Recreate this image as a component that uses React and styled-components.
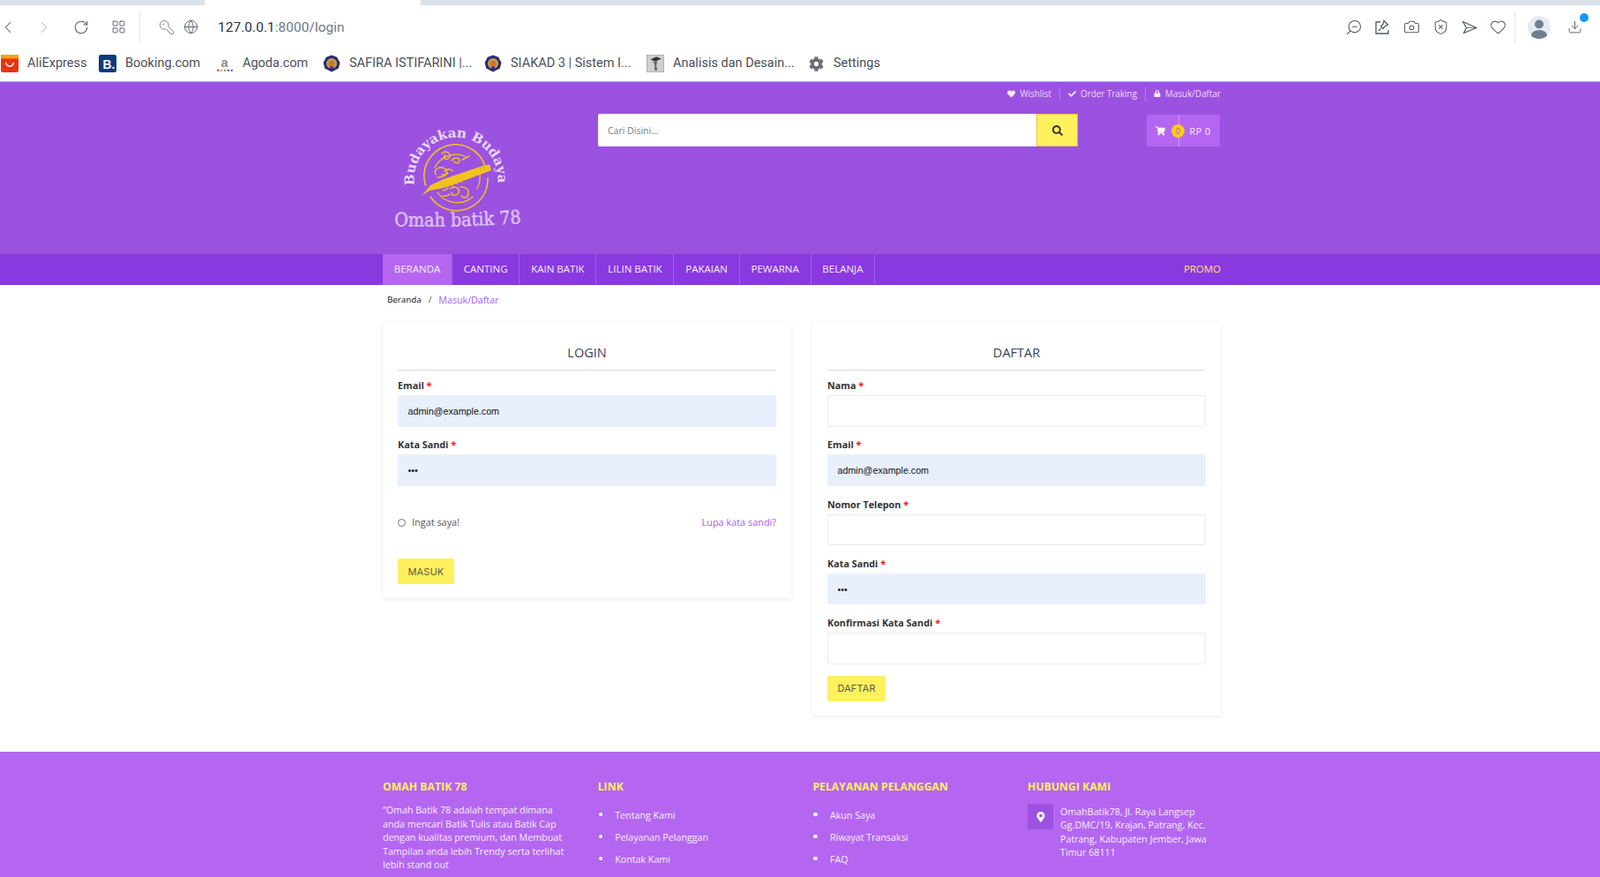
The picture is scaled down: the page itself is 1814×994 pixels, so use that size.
import React from "react";
import styled, { createGlobalStyle } from "styled-components";
import { ChevronLeft, ChevronRight, RotateCw, LayoutGrid, KeyRound, Globe, ZoomOut, Camera, ShieldX, Heart, Download } from "lucide-react";
import { FaHeart, FaCheck, FaLock, FaSearch, FaShoppingCart, FaMapMarkerAlt, FaCog } from "react-icons/fa";

const Global = createGlobalStyle`
  html, body { margin: 0; padding: 0; background: #fff; height: 994px; overflow: hidden; }
  * { box-sizing: border-box; }
  body { font-family: "Open Sans", "Liberation Sans", sans-serif; color: #333; }
`;

const Page = styled.div`width: 1814px; height: 994px; overflow: hidden; display: flex; flex-direction: column;`;

const TabStrip = styled.div`height: 6px; background: #dbe1e9; padding-left: 232px; flex: none;`;
const ActiveTab = styled.div`width: 245px; height: 6px; background: #fff; border-radius: 0 0 3px 3px;`;

const Toolbar = styled.div`height: 49px; flex: none; display: flex; align-items: center; position: relative; color: #4f5761;`;
const ToolBtn = styled.span`
  display: flex; align-items: center; justify-content: center; width: 22px; height: 22px; flex: none;
  margin-left: ${p => p.$ml || 0}px; color: ${p => p.$c || "#535b65"};
`;
const ToolDivider = styled.span`width: 1px; height: 36px; background: #e3e6ea; flex: none; margin-left: ${p => p.$ml}px;`;
const Url = styled.div`margin-left: 20px; font: 15.3px/20px "Roboto", sans-serif; color: #2a2f36; letter-spacing: .12px; flex: 1;`;
const UrlRest = styled.span`color: #6c7885;`;
const Avatar = styled.span`
  width: 26px; height: 26px; border-radius: 50%; background: #e6ebf1; margin-left: 14px; flex: none;
  position: relative; overflow: hidden; display: block;
`;
const DownloadWrap = styled.span`position: relative; display: flex; margin-left: 19px; margin-right: 20px; color: #535b65;`;
const Dot = styled.span`position: absolute; width: 10px; height: 10px; border-radius: 50%; background: #0c9aff; top: -7px; right: -7px;`;

const Bookmarks = styled.div`
  height: 38px; flex: none; display: flex; align-items: center; border-bottom: 1px solid #b4b9bf; padding-bottom: 3px; padding-left: 1px;
  font: 14.5px/18px "Roboto", sans-serif; color: #4b5058;
`;
const Mark = styled.div`display: flex; align-items: center; gap: 10px; width: ${p => p.$w}px; flex: none; white-space: nowrap;`;
const Fav = styled.svg`width: 20px; height: 20px; flex: none;`;
const CogWrap = styled.span`display: flex; color: #6b6e72; font-size: 17px; width: 18px;`;

const Header = styled.header`height: 195px; flex: none; background: #9c52e0;`;
const Wrap = styled.div`width: 950px; margin-left: 434px;`;
const TopLinks = styled.div`display: flex; justify-content: flex-end; align-items: center; height: 26px; color: #eedcff; font-size: 9.9px;`;
const TopLink = styled.span`
  display: flex; align-items: center; gap: 5px; padding: 0 9px; height: 15px;
  border-left: ${p => p.$first ? "none" : "1px solid #b27ee8"};
  &:last-child { padding-right: 0; }
  svg { color: #f3e9ff; font-size: ${p => p.$sz || 9}px; }
`;
const HeadRow = styled.div`display: flex; align-items: flex-start; position: relative;`;
const LogoBox = styled.div`width: 244px; height: 169px; padding: 13px 0 0 10px; flex: none;`;
const Search = styled.form`display: flex; width: 544px; height: 37px; margin-top: 10px; flex: none;`;
const SearchInput = styled.input`
  flex: 1; min-width: 0; border: 0; outline: 0; background: #fff; padding: 0 11px; font: 10.5px "Open Sans", sans-serif; color: #555;
  border-radius: 2px 0 0 2px;
  &::placeholder { color: #7a7a7a; opacity: 1; }
`;
const SearchBtn = styled.button`
  width: 47px; border: 1px solid #e9c83d; background: #fff05e; color: #333; font-size: 12px; display: flex; align-items: center; justify-content: center; padding: 0;
`;
const Cart = styled.div`
  margin-left: 78px; margin-top: 11px; width: 83px; height: 36px; background: #b466f0; border-radius: 2px; display: flex; align-items: center;
  color: #f4eaff; font-size: 11px; position: relative; flex: none;
`;
const CartLeft = styled.span`
  width: 36.5px; height: 100%; border-right: 1px solid #cf9df5; display: flex; align-items: center; padding-left: 10px; font-size: 11px; color: #fff; flex: none;
`;
const Count = styled.span`
  position: absolute; left: 28px; top: 11px; width: 15px; height: 15px; border-radius: 50%; background: #fdc91d; color: #946fb0;
  font-size: 8.5px; line-height: 15px; text-align: center;
`;
const CartTotal = styled.span`padding-left: 12px; letter-spacing: .4px;`;

const Nav = styled.nav`height: 35px; flex: none; background: #8a38e0;`;
const NavRow = styled.div`display: flex; align-items: stretch; height: 35px;`;
const NavItem = styled.a`
  padding: 0 12.8px 2px; display: flex; align-items: center; color: #f6efff; font-size: 11.5px;
  border-right: 1px solid #a05fe6; background: ${p => p.$active ? "#b466f0" : "transparent"};
`;
const Promo = styled.a`margin-left: auto; display: flex; align-items: center; color: #ffe65c; font-size: 11.4px; padding-bottom: 2px;`;

const Crumbs = styled.div`height: 43px; flex: none; padding: 9px 0 0 5px; font-size: 9.8px; line-height: 16px; display: flex; gap: 8px;`;
const CrumbHome = styled.span`color: #111;`;
const CrumbSep = styled.span`color: #444;`;
const CrumbCur = styled.span`color: #a660ec; font-size: 10.7px;`;

const Columns = styled.div`display: flex; gap: 24px; align-items: flex-start; height: 486px; flex: none;`;
const Card = styled.section`
  width: 463px; background: #fff; padding: 17px 17px 16px; flex: none; box-shadow: 0 1px 5px rgba(0,0,0,.09);
`;
const CardTitle = styled.h2`
  margin: 0 0 9px; text-align: center; font-weight: 400; font-size: 14.5px; line-height: 20px; color: #3a4256; padding: 7px 0 9px; border-bottom: 1px solid #dcdcdc;
`;
const Field = styled.div`margin-bottom: ${p => p.$mb ?? 12.8}px;`;
const Label = styled.label`display: block; font-size: 10.8px; font-weight: 700; line-height: 16px; color: #333; margin-bottom: 3px;`;
const Req = styled.span`color: #f01919;`;
const Input = styled.input`
  display: block; width: 100%; height: 35.5px; border: 1px solid ${p => p.$filled ? "#e8f0fd" : "#ebebeb"}; border-radius: 2px; outline: 0;
  background: ${p => p.$filled ? "#e8f0fd" : "#fff"}; padding: 0 10.5px; font: 10.7px "Liberation Sans", sans-serif; color: #111;
`;
const RememberRow = styled.div`display: flex; align-items: center; justify-content: space-between; margin-top: 32.5px; height: 16px; font-size: 10.9px;`;
const Remember = styled.span`display: flex; align-items: center; gap: 7px; color: #555;`;
const Radio = styled.span`width: 9px; height: 9px; border-radius: 50%; border: 1px solid #777; display: block; margin-top: 2px;`;
const Forgot = styled.a`color: #a660ec;`;
const Submit = styled.button`
  display: block; height: 29px; padding: 0 11.5px; border: 0; border-radius: 2px; background: #fff05e; color: #5c5c40;
  font: 11px "Inter", "Open Sans", sans-serif; letter-spacing: .1px; margin-top: ${p => p.$mt}px;
`;

const Footer = styled.footer`flex: 1; background: #b466f0; padding-top: 30px; color: #f6efff; font-size: 10.7px; overflow: hidden;`;
const FooterGrid = styled.div`display: grid; grid-template-columns: repeat(4, 243.7px);`;
const FootHead = styled.h3`margin: 1px 0 10px; font-size: 12.1px; line-height: 18px; font-weight: 700; color: #fff05e; letter-spacing: .1px;`;
const FootText = styled.p`margin: 1.5px 0 0; line-height: 15.6px; width: 212px;`;
const FootList = styled.ul`margin: 3px 0 0; padding: 0; list-style: none;`;
const FootItem = styled.li`
  display: flex; align-items: center; gap: 14px; height: 25px;
  &::before { content: ""; width: 4.5px; height: 4.5px; border-radius: 50%; background: #fff; margin-left: 1px; margin-top: -1px; }
`;
const Contact = styled.div`display: flex; gap: 8px;`;
const PinBox = styled.span`
  width: 29px; height: 29px; flex: none; background: #9c52e0; border-radius: 1px; display: flex; align-items: center; justify-content: center; color: #fff; font-size: 12px;
`;
const ContactText = styled.p`margin: 1.5px 0 0; line-height: 15.6px; width: 175px;`;

const I = { size: 18, strokeWidth: 1.4 };

function Crest() {
  return (
    <Fav viewBox="0 0 18 18">
      <path d="M9 .5 14.5 2.5 17.5 8 16 14 9 17.5 2 14 .5 8 3.5 2.5Z" fill="#2d2a6e" />
      <circle cx="9" cy="9" r="5.5" fill="#b9a24e" />
      <circle cx="9" cy="9" r="3" fill="#d8702c" />
      <path d="M7 12h4v2.5H7z" fill="#3c3a80" />
    </Fav>
  );
}

function Logo() {
  return (
    <svg width="150" height="130" viewBox="0 0 150 130">
      <defs>
        <path id="arc" d="M26 78 A 47.5 47.5 0 1 1 120 78" fill="none" />
        <path id="wave" d="M3 124 Q 75 126 147 121" fill="none" />
      </defs>
      <text fontFamily="'DejaVu Serif', serif" fontSize="15" fontWeight="700" fill="#e9d9f5">
        <textPath href="#arc" textLength="160" lengthAdjust="spacingAndGlyphs">Budayakan Budaya</textPath>
      </text>
      <g fill="none" stroke="#f2c21f" strokeLinecap="round">
        <path d="M38.5 78 A 35.5 35.5 0 0 1 106 56" strokeWidth="1.6" />
        <path d="M109 70 A 35.5 35.5 0 0 1 44 91" strokeWidth="1.6" />
        <path d="M52 86 A 27 27 0 0 0 92 91M100 66 A 27 27 0 0 1 97 82M49 58 A 27 27 0 0 1 83 45" strokeWidth="1.3" />
        <path d="M57 42c5-5 12 1 8 5s-8-1-4-3M68 50c4-5 9-3 9 0s-5 4-6 1M80 49l8-4M50 66c-3-7 5-10 10-7s2 8-3 7M60 62c3-3 7-3 9 0M52 69c5 0 9-2 12-5" strokeWidth="1.4" />
        <path d="M66 82c5-4 12-1 10 4s-8 4-8 0M78 80c6-1 10 3 9 8s-6 5-8 2M58 84c3 0 5-2 6-4M58 90c4 1 6 0 8-2" strokeWidth="1.4" />
      </g>
      <path d="M34 90 44 78 59 71 103 56 111 54.5 113 61 76 75 59 81 43 84Z" fill="#f2c21f" />
      <path d="M68 74l1.5 5M73 72l1.5 5M78 70l1.5 5M83 68l1 4" stroke="#f2c21f" strokeWidth="1.3" />
      <path d="M100 57l2 5M104 56l2 5" stroke="#c9992a" strokeWidth=".8" />
      <text fontFamily="'DejaVu Serif', serif" fontSize="21" fill="#e4cdf4" stroke="#e4cdf4" strokeWidth=".5" opacity=".9">
        <textPath href="#wave" textLength="144" lengthAdjust="spacingAndGlyphs">Omah batik 78</textPath>
      </text>
    </svg>
  );
}

export default function App() {
  return (
    <Page>
      <Global />
      <TabStrip><ActiveTab /></TabStrip>
      <Toolbar>
        <ToolBtn $ml={-2}><ChevronLeft size={26} strokeWidth={1.1} /></ToolBtn>
        <ToolBtn $ml={19} $c="#b4b9bf"><ChevronRight size={26} strokeWidth={1.1} /></ToolBtn>
        <ToolBtn $ml={20}><RotateCw {...I} /></ToolBtn>
        <ToolBtn $ml={20}><LayoutGrid size={17} strokeWidth={1.3} /></ToolBtn>
        <ToolDivider $ml={13} />
        <ToolBtn $ml={19} $c="#7a8089"><KeyRound size={18} strokeWidth={1.3} style={{ transform: "scaleX(-1)" }} /></ToolBtn>
        <ToolBtn $ml={5}><Globe size={17} strokeWidth={1.3} /></ToolBtn>
        <Url>127.0.0.1<UrlRest>:8000/login</UrlRest></Url>
        <ToolBtn><ZoomOut size={20} strokeWidth={1.3} style={{ transform: "scaleX(-1)" }} /></ToolBtn>
        <ToolBtn $ml={10}>
          <svg width="18" height="18" viewBox="0 0 18 18" fill="none" stroke="currentColor" strokeWidth="1.3">
            <path d="M7 3H2v13h14v-4" /><path d="M11 1.5 15.5 6l-3 1.5-2.5 3-2.5-2.5 2.5-2.5ZM7.5 10.5 5 13" />
          </svg>
        </ToolBtn>
        <ToolBtn $ml={11}><Camera size={19} strokeWidth={1.3} /></ToolBtn>
        <ToolBtn $ml={11}><ShieldX size={19} strokeWidth={1.3} /></ToolBtn>
        <ToolBtn $ml={11}>
          <svg width="18" height="18" viewBox="0 0 18 18" fill="none" stroke="currentColor" strokeWidth="1.3" strokeLinejoin="round">
            <path d="M1.5 2.5 17 9.5 2.5 15.5 5.5 9.5Z" /><path d="M5.5 9.5H17" strokeWidth=".8" />
          </svg>
        </ToolBtn>
        <ToolBtn $ml={10}><Heart size={19} strokeWidth={1.3} /></ToolBtn>
        <ToolDivider $ml={8} />
        <Avatar>
          <svg width="26" height="26" viewBox="0 0 26 26" fill="#6f7f90">
            <circle cx="13" cy="9.5" r="5" /><ellipse cx="13" cy="22" rx="9" ry="6" />
          </svg>
        </Avatar>
        <DownloadWrap><Download size={17} strokeWidth={1.3} /><Dot /></DownloadWrap>
      </Toolbar>
      <Bookmarks>
        <Mark $w={111}>
          <Fav viewBox="0 0 18 18"><rect width="18" height="18" rx="2" fill="#e8340f" /><rect width="18" height="4" rx="1" fill="#f5a216" /><path d="M5 8c1 5 7 5 8 0" fill="none" stroke="#fff" strokeWidth="1.4" /></Fav>
          AliExpress
        </Mark>
        <Mark $w={133}>
          <Fav viewBox="0 0 18 18"><rect width="18" height="18" rx="2" fill="#0c3b7c" /><text x="4" y="14" fontFamily="'Liberation Sans', sans-serif" fontSize="12.5" fontWeight="700" fill="#fff">B.</text></Fav>
          Booking.com
        </Mark>
        <Mark $w={121}>
          <Fav viewBox="0 0 18 18" style={{ overflow: "visible" }}><text x="5" y="12.5" fontFamily="'Liberation Sans', sans-serif" fontSize="13" fontWeight="700" fill="#8a8d90">a</text><g><circle cx="2" cy="16" r="1.1" fill="#e8332a" /><circle cx="5.5" cy="16" r="1.1" fill="#f5a216" /><circle cx="9" cy="16" r="1.1" fill="#7dbb35" /><circle cx="12.5" cy="16" r="1.1" fill="#8a3fb5" /><circle cx="16" cy="16" r="1.1" fill="#2a7de0" /></g></Fav>
          Agoda.com
        </Mark>
        <Mark $w={183}><Crest />SAFIRA ISTIFARINI |...</Mark>
        <Mark $w={184}><Crest />SIAKAD 3 | Sistem I...</Mark>
        <Mark $w={184}>
          <Fav viewBox="0 0 18 18"><rect width="18" height="18" rx="1" fill="#cfcfcf" stroke="#999" /><path d="M4 5l6-3 5 2-6 3Z" fill="#333" /><path d="M7 7h4l-1 4 1 5H8l.5-5Z" fill="#666" /></Fav>
          Analisis dan Desain...
        </Mark>
        <Mark $w={90}><CogWrap><FaCog /></CogWrap>Settings</Mark>
      </Bookmarks>

      <Header>
        <Wrap>
          <TopLinks>
            <TopLink $first><FaHeart />Wishlist</TopLink>
            <TopLink><FaCheck />Order Traking</TopLink>
            <TopLink $sz={8}><FaLock />Masuk/Daftar</TopLink>
          </TopLinks>
          <HeadRow>
            <LogoBox><Logo /></LogoBox>
            <Search onSubmit={e => e.preventDefault()}>
              <SearchInput placeholder="Cari Disini..." />
              <SearchBtn type="submit"><FaSearch /></SearchBtn>
            </Search>
            <Cart>
              <CartLeft><FaShoppingCart /></CartLeft>
              <Count>0</Count>
              <CartTotal>RP 0</CartTotal>
            </Cart>
          </HeadRow>
        </Wrap>
      </Header>

      <Nav>
        <Wrap>
          <NavRow>
            <NavItem $active>BERANDA</NavItem>
            <NavItem>CANTING</NavItem>
            <NavItem>KAIN BATIK</NavItem>
            <NavItem>LILIN BATIK</NavItem>
            <NavItem>PAKAIAN</NavItem>
            <NavItem>PEWARNA</NavItem>
            <NavItem>BELANJA</NavItem>
            <Promo>PROMO</Promo>
          </NavRow>
        </Wrap>
      </Nav>

      <Wrap>
        <Crumbs>
          <CrumbHome>Beranda</CrumbHome><CrumbSep>/</CrumbSep><CrumbCur>Masuk/Daftar</CrumbCur>
        </Crumbs>
        <Columns>
          <Card>
            <CardTitle>LOGIN</CardTitle>
            <Field>
              <Label>Email <Req>*</Req></Label>
              <Input $filled readOnly value="admin@example.com" />
            </Field>
            <Field $mb={0}>
              <Label>Kata Sandi <Req>*</Req></Label>
              <Input $filled readOnly type="password" value="123" />
            </Field>
            <RememberRow>
              <Remember><Radio />Ingat saya!</Remember>
              <Forgot>Lupa kata sandi?</Forgot>
            </RememberRow>
            <Submit $mt={34}>MASUK</Submit>
          </Card>
          <Card>
            <CardTitle>DAFTAR</CardTitle>
            <Field>
              <Label>Nama <Req>*</Req></Label>
              <Input readOnly />
            </Field>
            <Field>
              <Label>Email <Req>*</Req></Label>
              <Input $filled readOnly value="admin@example.com" />
            </Field>
            <Field>
              <Label>Nomor Telepon <Req>*</Req></Label>
              <Input readOnly />
            </Field>
            <Field>
              <Label>Kata Sandi <Req>*</Req></Label>
              <Input $filled readOnly type="password" value="123" />
            </Field>
            <Field $mb={0}>
              <Label>Konfirmasi Kata Sandi <Req>*</Req></Label>
              <Input readOnly />
            </Field>
            <Submit $mt={13}>DAFTAR</Submit>
          </Card>
        </Columns>
      </Wrap>

      <Footer>
        <Wrap>
          <FooterGrid>
            <div>
              <FootHead>OMAH BATIK 78</FootHead>
              <FootText>“Omah Batik 78 adalah tempat dimana anda mencari Batik Tulis atau Batik Cap dengan kualitas premium, dan Membuat Tampilan anda lebih Trendy serta terlihat lebih stand out</FootText>
            </div>
            <div>
              <FootHead>LINK</FootHead>
              <FootList>
                <FootItem>Tentang Kami</FootItem>
                <FootItem>Pelayanan Pelanggan</FootItem>
                <FootItem>Kontak Kami</FootItem>
              </FootList>
            </div>
            <div>
              <FootHead>PELAYANAN PELANGGAN</FootHead>
              <FootList>
                <FootItem>Akun Saya</FootItem>
                <FootItem>Riwayat Transaksi</FootItem>
                <FootItem>FAQ</FootItem>
              </FootList>
            </div>
            <div>
              <FootHead>HUBUNGI KAMI</FootHead>
              <Contact>
                <PinBox><FaMapMarkerAlt /></PinBox>
                <ContactText>OmahBatik78, Jl. Raya Langsep Gg.DMC/19, Krajan, Patrang, Kec. Patrang, Kabupaten Jember, Jawa Timur 68111</ContactText>
              </Contact>
            </div>
          </FooterGrid>
        </Wrap>
      </Footer>
    </Page>
  );
}
